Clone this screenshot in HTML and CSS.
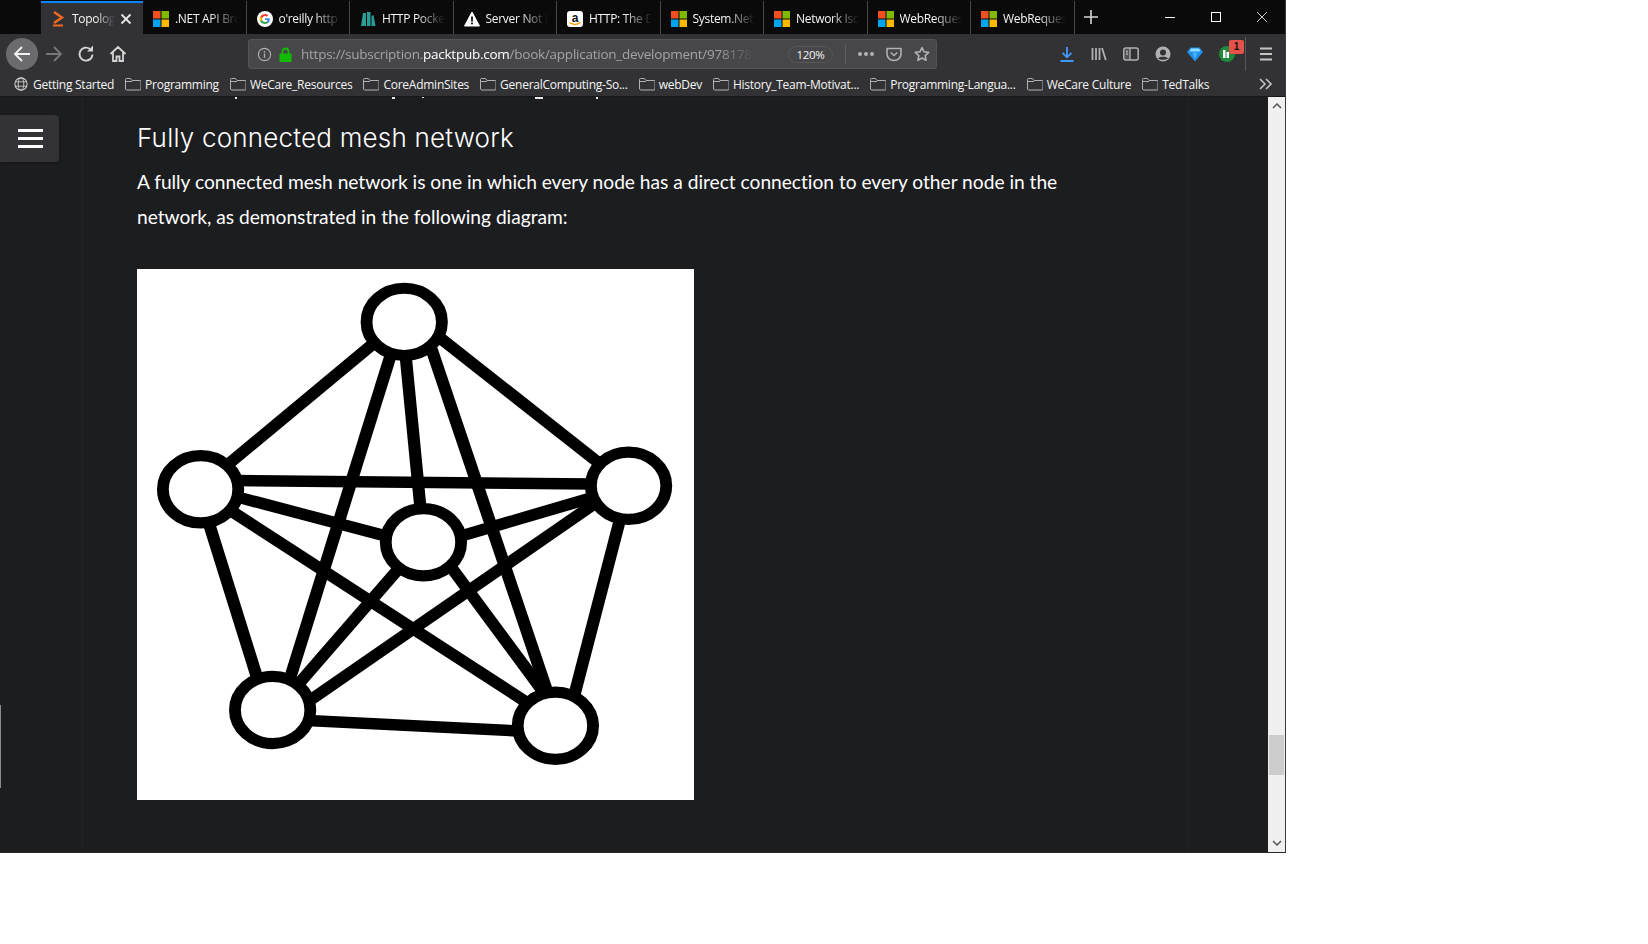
FILE: index.html
```html
<!DOCTYPE html>
<html>
<head>
    <title>Fully connected mesh network</title>
    <meta charset="UTF-8">
    <link rel="stylesheet" href="styles.css">
</head>
<body>
    <svg class="defs" width="0" height="0">
        <symbol id="ms" viewBox="0 0 16 16">
            <rect x="0" y="0" width="7.5" height="7.5" fill="#f25022"/>
            <rect x="8.5" y="0" width="7.5" height="7.5" fill="#7fba00"/>
            <rect x="0" y="8.5" width="7.5" height="7.5" fill="#00a4ef"/>
            <rect x="8.5" y="8.5" width="7.5" height="7.5" fill="#ffb900"/>
        </symbol>
        <symbol id="folder" viewBox="0 0 16 14">
            <path d="M.5 12V2.5a1 1 0 0 1 1-1h4l1.500 2h8a1 1 0 0 1 1 1V12a1 1 0 0 1-1 1h-13a1 1 0 0 1-1-1zM.5 4.500h6.500" fill="none" stroke="#b1b1b3"/>
        </symbol>
    </svg>

    <div class="window">
        <!-- tabs -->
        <div class="tabbar">
            <div class="tab active">
                <svg class="favicon" viewBox="0 0 16 16"><path d="M3 1L11 6.500 3 12" fill="none" stroke="#f26a21" stroke-width="2.400"/><rect x="2" y="13.500" width="10" height="2" fill="#f26a21"/></svg>
                <span class="tab-title">Topology</span>
                <svg class="tab-close" viewBox="0 0 12 12"><path d="M1.500 1.500l9 9M10.500 1.500l-9 9" stroke="#e8e8e8" stroke-width="1.800"/></svg>
            </div>
            <div class="tab">
                <svg class="favicon"><use href="#ms"/></svg>
                <span class="tab-title">.NET API Browser</span>
            </div>
            <div class="tab">
                <svg class="favicon" viewBox="0 0 16 16">
                    <circle cx="8" cy="8" r="8" fill="#fff"/>
                    <path d="M12.800 8.200c0-.4 0-.7-.1-1H8v1.900h2.700c-.1.700-.5 1.200-1 1.600v1.300h1.600c1-.9 1.500-2.200 1.500-3.800z" fill="#4285f4"/>
                    <path d="M8 13c1.300 0 2.400-.4 3.300-1.200l-1.600-1.300c-.4.300-1 .5-1.700.5-1.300 0-2.400-.9-2.800-2H3.200v1.300C4 12 5.900 13 8 13z" fill="#34a853"/>
                    <path d="M5.200 9c-.2-.6-.2-1.300 0-1.900V5.800H3.200c-.7 1.400-.7 3 0 4.400L5.200 9z" fill="#fbbc05"/>
                    <path d="M8 4.900c.7 0 1.400.3 1.900.8l1.400-1.400C10.500 3.500 9.300 3 8 3 5.900 3 4 4.200 3.200 5.800l2 1.500C5.600 5.900 6.700 4.900 8 4.900z" fill="#ea4335"/>
                </svg>
                <span class="tab-title">o'reilly http pocket</span>
            </div>
            <div class="tab">
                <svg class="favicon" viewBox="0 0 16 16"><path d="M1 15L3 2h3v13zM7 15V1h3.500v14zM11.500 15V5l2-1 2 11z" fill="#2a9d96"/></svg>
                <span class="tab-title">HTTP Pocket</span>
            </div>
            <div class="tab">
                <svg class="favicon" viewBox="0 0 16 16"><path d="M8 1l7.500 14H.5z" fill="#fff" stroke="#fff" stroke-linejoin="round"/><rect x="7.100" y="5.500" width="1.800" height="5" fill="#111"/><rect x="7.100" y="11.500" width="1.800" height="1.800" fill="#111"/></svg>
                <span class="tab-title">Server Not Found</span>
            </div>
            <div class="tab">
                <svg class="favicon" viewBox="0 0 16 16">
                    <rect width="16" height="16" rx="3" fill="#fff"/>
                    <text x="8" y="10.500" class="amazon-a">a</text>
                    <path d="M2.500 11.500c3.500 2.500 7.500 2.500 11 0" fill="none" stroke="#f90" stroke-width="1.500"/>
                </svg>
                <span class="tab-title">HTTP: The Definitive</span>
            </div>
            <div class="tab">
                <svg class="favicon"><use href="#ms"/></svg>
                <span class="tab-title">System.Net.Http</span>
            </div>
            <div class="tab">
                <svg class="favicon"><use href="#ms"/></svg>
                <span class="tab-title">Network Isolation</span>
            </div>
            <div class="tab">
                <svg class="favicon"><use href="#ms"/></svg>
                <span class="tab-title">WebRequest</span>
            </div>
            <div class="tab">
                <svg class="favicon"><use href="#ms"/></svg>
                <span class="tab-title">WebRequest</span>
            </div>
            <svg class="new-tab" viewBox="0 0 14 14"><path d="M7 0v14M0 7h14" stroke="#d8d8d8" stroke-width="1.600"/></svg>
            <div class="window-controls">
                <svg viewBox="0 0 12 12"><path d="M1 6.500h10" stroke="#fff"/></svg>
                <svg viewBox="0 0 12 12"><rect x="1.500" y="1.500" width="9" height="9" fill="none" stroke="#fff"/></svg>
                <svg viewBox="0 0 12 12"><path d="M1 1l10 10M11 1L1 11" stroke="#fff" stroke-width=".8"/></svg>
            </div>
        </div>

        <!-- toolbar -->
        <div class="toolbar">
            <div class="nav-btn back">
                <svg viewBox="0 0 18 18"><path d="M17 9H2M9 2L2 9l7 7" fill="none" stroke="#f2f2f2" stroke-width="1.800"/></svg>
            </div>
            <div class="nav-btn">
                <svg viewBox="0 0 18 18"><path d="M1 9h15M9 2l7 7-7 7" fill="none" stroke="#77777a" stroke-width="1.800"/></svg>
            </div>
            <div class="nav-btn">
                <svg viewBox="0 0 18 18"><path d="M15.500 9.500A6.500 6.500 0 1 1 13 4" fill="none" stroke="#d4d4d5" stroke-width="1.900"/><path d="M10 5.500h6v-6z" transform="translate(0 1)" fill="#d4d4d5"/></svg>
            </div>
            <div class="nav-btn">
                <svg viewBox="0 0 18 18"><path d="M1.500 9L9 2l7.500 7M4 7.500V16h3.500v-4.500h3V16H14V7.500" fill="none" stroke="#d4d4d5" stroke-width="1.800"/></svg>
            </div>

            <div class="urlbar">
                <svg class="url-info" viewBox="0 0 16 16"><circle cx="8" cy="8" r="6.500" fill="none" stroke="#b1b1b3" stroke-width="1.200"/><rect x="7.300" y="7" width="1.400" height="4.500" fill="#b1b1b3"/><rect x="7.300" y="4.500" width="1.400" height="1.500" fill="#b1b1b3"/></svg>
                <svg class="url-lock" viewBox="0 0 13 15"><path d="M3.500 7V4.500a3 3 0 0 1 6 0V7" fill="none" stroke="#12bc00" stroke-width="1.800"/><rect x="0.500" y="6.500" width="12" height="8.500" rx="1" fill="#12bc00"/></svg>
                <span class="url-text">https://subscription.<b>packtpub.com</b>/book/application_development/9781788</span>
                <span class="zoom-pill">120%</span>
                <span class="url-sep"></span>
                <div class="url-dots"><i></i><i></i><i></i></div>
                <svg class="url-icon" viewBox="0 0 16 16"><path d="M1 2.500h14v5.500a7 6.500 0 0 1-14 0z" fill="none" stroke="#b1b1b3" stroke-width="1.600" stroke-linejoin="round"/><path d="M4.800 6.500L8 9.500l3.200-3" fill="none" stroke="#b1b1b3" stroke-width="1.600"/></svg>
                <svg class="url-icon" viewBox="0 0 16 16"><path d="M8 1.500l2 4.300 4.700.6-3.500 3.200.9 4.700L8 12l-4.100 2.300.9-4.700L1.300 6.400 6 5.800z" fill="none" stroke="#b1b1b3" stroke-width="1.600" stroke-linejoin="round"/></svg>
            </div>

            <div class="tools">
                <svg class="tool" viewBox="0 0 16 16"><path d="M8 1v10M3.500 6.800L8 11.300l4.500-4.500M1.500 15h13" fill="none" stroke="#3f9bff" stroke-width="1.800"/></svg>
                <svg class="tool" viewBox="0 0 16 16"><path d="M1.500 2v12M5 2v12M8.500 2v12M11 2l3.800 12" fill="none" stroke="#b1b1b3" stroke-width="1.800"/></svg>
                <svg class="tool" viewBox="0 0 16 16"><rect x=".8" y="2" width="14.400" height="12" rx="2" fill="none" stroke="#b1b1b3" stroke-width="1.500"/><rect x="1.500" y="3" width="5.500" height="10" fill="#b1b1b3" opacity=".25"/><path d="M7 2v12M3 5.500h2M3 8h2" stroke="#b1b1b3" stroke-width="1.300"/></svg>
                <svg class="tool" viewBox="0 0 16 16"><circle cx="8" cy="8" r="7.500" fill="#b1b1b3"/><circle cx="8" cy="6.500" r="3" fill="#323234"/><path d="M3 12.500c1-2.500 9-2.500 10 0-2.500 1.800-7.500 1.800-10 0z" fill="#323234"/></svg>
                <svg class="tool" viewBox="0 0 16 16"><path d="M3.500 1.500h9L16 6l-8 9.500L0 6z" fill="#1f8fe8"/><path d="M4 2.500h8l1.500 3H2.500z" fill="#8fdcff"/><path d="M5.500 6.500h5L8 13z" fill="#47b5f5"/></svg>
                <div class="tool ext">
                    <svg viewBox="0 0 16 16"><circle cx="8" cy="8" r="8" fill="#1f8a3c"/><rect x="4" y="4" width="2.500" height="8" fill="#fff"/><rect x="7.500" y="6" width="2.500" height="6" fill="#fff"/></svg>
                    <span class="ext-badge">1</span>
                </div>
                <span class="tools-sep"></span>
                <svg class="tool" viewBox="0 0 16 16"><path d="M2 2.500h12M2 8h12M2 13.500h12" stroke="#c4c4c5" stroke-width="1.800"/></svg>
            </div>
        </div>

        <!-- bookmarks -->
        <div class="bookmarks">
            <div class="bookmark">
                <svg class="bm-icon" viewBox="0 0 16 16"><circle cx="8" cy="8" r="7" fill="none" stroke="#d0d0d0" stroke-width="1.200"/><ellipse cx="8" cy="8" rx="3.200" ry="7" fill="none" stroke="#d0d0d0"/><path d="M1.500 5.500h13M1.500 10.500h13" stroke="#d0d0d0"/></svg>
                Getting Started
            </div>
            <div class="bookmark"><svg class="bm-icon"><use href="#folder"/></svg>Programming</div>
            <div class="bookmark"><svg class="bm-icon"><use href="#folder"/></svg>WeCare_Resources</div>
            <div class="bookmark"><svg class="bm-icon"><use href="#folder"/></svg>CoreAdminSites</div>
            <div class="bookmark"><svg class="bm-icon"><use href="#folder"/></svg>GeneralComputing-So...</div>
            <div class="bookmark"><svg class="bm-icon"><use href="#folder"/></svg>webDev</div>
            <div class="bookmark"><svg class="bm-icon"><use href="#folder"/></svg>History_Team-Motivat...</div>
            <div class="bookmark"><svg class="bm-icon"><use href="#folder"/></svg>Programming-Langua...</div>
            <div class="bookmark"><svg class="bm-icon"><use href="#folder"/></svg>WeCare Culture</div>
            <div class="bookmark"><svg class="bm-icon"><use href="#folder"/></svg>TedTalks</div>
            <svg class="bm-more" viewBox="0 0 14 12"><path d="M1 1l5 5-5 5M7 1l5 5-5 5" fill="none" stroke="#c4c4c5" stroke-width="1.600"/></svg>
        </div>

        <!-- page -->
        <div class="viewport">
            <div class="page">
                <svg class="cut-line" width="620" height="2">
                    <rect x="98" width="2" height="2"/><rect x="255" width="3" height="2"/><rect x="285" width="2" height="1"/>
                    <rect x="398" width="8" height="2"/><rect x="459" width="2" height="2"/>
                </svg>
                <button class="menu-btn"><i></i><i></i><i></i></button>
                <div class="book-column">
                    <h2>Fully connected mesh network</h2>
                    <p>A fully connected mesh network is one in which every node has a direct connection to every other node in the network, as demonstrated in the following diagram:</p>
                    <div class="figure">
                        <svg class="mesh" viewBox="18 26 1507 1516" preserveAspectRatio="none">
                            <g class="mesh-links">
                                <line x1="660" y1="237" x2="255" y2="592"/>
                                <line x1="705" y1="270" x2="432" y2="1195"/>
                                <line x1="745" y1="275" x2="785" y2="710"/>
                                <line x1="815" y1="255" x2="1127" y2="1230"/>
                                <line x1="835" y1="220" x2="1275" y2="586"/>
                                <line x1="280" y1="630" x2="1250" y2="640"/>
                                <line x1="290" y1="677" x2="690" y2="788"/>
                                <line x1="275" y1="718" x2="1085" y2="1272"/>
                                <line x1="212" y1="750" x2="345" y2="1200"/>
                                <line x1="895" y1="788" x2="1255" y2="677"/>
                                <line x1="725" y1="883" x2="450" y2="1217"/>
                                <line x1="860" y1="866" x2="1125" y2="1244"/>
                                <line x1="1260" y1="693" x2="480" y2="1262"/>
                                <line x1="1325" y1="740" x2="1202" y2="1240"/>
                                <line x1="480" y1="1315" x2="1050" y2="1345"/>
                            </g>
                            <g class="mesh-nodes">
                                <ellipse cx="741" cy="177" rx="102" ry="96"/>
                                <ellipse cx="190" cy="655" rx="102" ry="96"/>
                                <ellipse cx="1348" cy="645" rx="102" ry="96"/>
                                <ellipse cx="793" cy="806" rx="102" ry="96"/>
                                <ellipse cx="385" cy="1285" rx="102" ry="96"/>
                                <ellipse cx="1150" cy="1330" rx="102" ry="96"/>
                            </g>
                        </svg>
                    </div>
                </div>
                <span class="edge-mark"></span>
            </div>
            <div class="scrollbar">
                <svg viewBox="0 0 10 6"><path d="M1 5l4-4 4 4" fill="none" stroke="#555" stroke-width="1.500"/></svg>
                <div class="scroll-track"><div class="scroll-thumb"></div></div>
                <svg viewBox="0 0 10 6"><path d="M1 1l4 4 4-4" fill="none" stroke="#555" stroke-width="1.500"/></svg>
            </div>
        </div>
    </div>
</body>
</html>
```

FILE: styles.css
```css
* {
    box-sizing: border-box;
}

html, body {
    margin: 0;
    height: 100%;
    background: #fff;
    overflow: hidden;
}

body {
    font-family: 'Open Sans', 'Noto Sans', sans-serif;
    font-size: 12px;
    color: #f5f5f5;
}

.defs {
    position: absolute;
}

.window {
    width: 1286px;
    height: 853px;
    display: flex;
    flex-direction: column;
    border-right: 1px solid #3a3a3c;
    border-bottom: 1px solid #2a2a2c;
    background: #1c1d1f;
}

/* tabs */
.tabbar {
    height: 34px;
    flex: none;
    display: flex;
    align-items: stretch;
    padding-left: 41px;
    background: #0a0a0b;
}

.tab {
    width: 103.500px;
    flex: none;
    display: flex;
    align-items: center;
    gap: 6px;
    padding: 2px 8px 0 10px;
    margin: 1px 0 0;
    border-right: 1px solid #48484a;
    overflow: hidden;
}

.tab.active {
    width: 102px;
    gap: 5px;
    padding: 0 12px 0 10px;
    margin-top: 1px;
    background: #323234;
    border-top: 2px solid #0a84ff;
    border-right: none;
}

.favicon {
    width: 16px;
    height: 16px;
    flex: none;
}

.tab-title {
    flex: 1;
    min-width: 0;
    white-space: nowrap;
    overflow: hidden;
    letter-spacing: -0.3px;
    -webkit-mask-image: linear-gradient(to right, #000 55%, transparent 100%);
    mask-image: linear-gradient(to right, #000 55%, transparent 100%);
}

.tab-close {
    width: 12px;
    height: 12px;
    flex: none;
    margin-right: -1px;
}

.amazon-a {
    font-family: 'Liberation Sans', sans-serif;
    font-size: 12px;
    font-weight: bold;
    text-anchor: middle;
    fill: #111;
}

.new-tab {
    width: 14px;
    height: 14px;
    align-self: center;
    margin-left: 9px;
}

.window-controls {
    margin-left: auto;
    display: flex;
    align-items: center;
    gap: 34px;
    padding-right: 17px;
}

.window-controls svg {
    width: 12px;
    height: 12px;
}

/* toolbar */
.toolbar {
    height: 38px;
    flex: none;
    display: flex;
    align-items: center;
    padding: 2px 0 0 6px;
    background: #323234;
}

.nav-btn {
    width: 32px;
    height: 32px;
    display: flex;
    align-items: center;
    justify-content: center;
}

.nav-btn svg {
    width: 18px;
    height: 18px;
}

.nav-btn.back {
    background: #6b6b6d;
    border-radius: 50%;
}

.urlbar {
    width: 689px;
    height: 30px;
    margin-left: 114px;
    display: flex;
    align-items: center;
    background: #474749;
    border: 1px solid #545456;
    border-radius: 3px;
}

.url-info {
    width: 15px;
    height: 15px;
    margin-left: 8px;
}

.url-lock {
    width: 13px;
    height: 15px;
    margin-left: 7px;
}

.url-text {
    width: 453px;
    margin-left: 9px;
    font-size: 13.500px;
    letter-spacing: -0.25px;
    white-space: nowrap;
    overflow: hidden;
    color: #a3a3a5;
    -webkit-mask-image: linear-gradient(to right, #000 92%, transparent 100%);
    mask-image: linear-gradient(to right, #000 92%, transparent 100%);
}

.url-text b {
    font-weight: 400;
    color: #fff;
}

.zoom-pill {
    width: 45px;
    height: 17px;
    margin-left: 34px;
    border: 1px solid #58585a;
    border-radius: 9px;
    font-size: 11.500px;
    line-height: 15px;
    text-align: center;
    letter-spacing: -0.3px;
}

.url-sep {
    width: 1px;
    height: 20px;
    margin-left: 12px;
    background: #5e5e60;
}

.url-dots {
    display: flex;
    gap: 2px;
    margin-left: 12px;
}

.url-dots i {
    width: 4px;
    height: 4px;
    border-radius: 50%;
    background: #b1b1b3;
}

.url-icon {
    width: 16px;
    height: 16px;
    margin-left: 12px;
}

.tools {
    margin-left: auto;
    display: flex;
    align-items: center;
    gap: 16px;
    padding-right: 11px;
}

.tool {
    width: 16px;
    height: 16px;
}

.tool svg {
    display: block;
    width: 16px;
    height: 16px;
}

.ext {
    position: relative;
}

.ext-badge {
    position: absolute;
    left: 10px;
    top: -6px;
    width: 15px;
    height: 14px;
    border-radius: 2px;
    background: #e5524a;
    color: #111;
    font-family: 'Liberation Sans', sans-serif;
    font-size: 10px;
    font-weight: bold;
    line-height: 14px;
    text-align: center;
}

.tools-sep {
    width: 1px;
    height: 34px;
    background: #58585a;
    margin: 0 -4px 0 -6px;
}

/* bookmarks */
.bookmarks {
    height: 25px;
    flex: none;
    display: flex;
    align-items: center;
    gap: 11px;
    padding: 0 12px 0 13px;
    background: #323234;
    border-bottom: 1px solid #18181a;
}

.bookmark {
    display: flex;
    align-items: center;
    gap: 4px;
    white-space: nowrap;
    letter-spacing: -0.25px;
}

.bm-icon {
    width: 16px;
    height: 14px;
    flex: none;
}

.bm-more {
    width: 14px;
    height: 12px;
    margin-left: auto;
}

/* page */
.viewport {
    flex: 1;
    min-height: 0;
    display: flex;
}

.page {
    flex: 1;
    position: relative;
    overflow: hidden;
    padding: 0 79px 0 82px;
    background: #1c1d1f;
}

.cut-line {
    position: absolute;
    left: 137px;
    top: 0;
    fill: #e8e8e8;
}

.menu-btn {
    position: absolute;
    left: 0;
    top: 18px;
    width: 59px;
    height: 47px;
    display: flex;
    flex-direction: column;
    align-items: center;
    justify-content: center;
    gap: 5px;
    padding: 0 0 0 1px;
    border: none;
    border-radius: 0 4px 4px 0;
    background: #333335;
    box-shadow: 0 1px 3px rgba(0,0,0,0.3);
}

.menu-btn i {
    width: 25px;
    height: 3px;
    background: #fff;
}

.book-column {
    height: 100%;
    padding: 25px 120px 0 54px;
    border-left: 1px solid #232325;
    border-right: 1px solid #232325;
}

.book-column h2 {
    margin: 0;
    font-family: 'Inter', sans-serif;
    font-size: 26px;
    font-weight: 300;
    line-height: 32px;
    letter-spacing: 0.2px;
    color: #fff;
}

.book-column p {
    margin: 10px 0 0;
    font-family: 'Lato', sans-serif;
    font-size: 19.200px;
    line-height: 35px;
    letter-spacing: -0.02px;
    color: #fff;
}

.figure {
    margin-top: 35px;
    width: 557px;
    height: 531px;
    background: #fff;
}

.mesh {
    display: block;
    width: 100%;
    height: 100%;
}

.mesh-links line {
    stroke: #000;
    stroke-width: 33;
}

.mesh-nodes ellipse {
    fill: #fff;
    stroke: #000;
    stroke-width: 32;
}

.edge-mark {
    position: absolute;
    left: 0;
    top: 608px;
    width: 1px;
    height: 83px;
    background: #8a8a8a;
}

.scrollbar {
    width: 17px;
    flex: none;
    display: flex;
    flex-direction: column;
    background: #f0f0f0;
}

.scrollbar svg {
    width: 10px;
    height: 6px;
    margin: 6px auto;
    flex: none;
}

.scroll-track {
    flex: 1;
    position: relative;
}

.scroll-thumb {
    position: absolute;
    top: 620px;
    left: 1px;
    right: 1px;
    height: 40px;
    background: #cdcdcd;
}
```
